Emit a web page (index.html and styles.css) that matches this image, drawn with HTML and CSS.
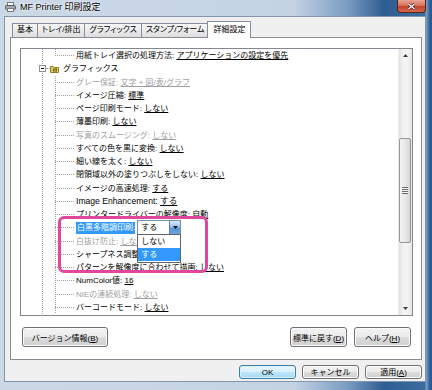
FILE: index.html
```html
<!DOCTYPE html>
<html lang="ja">
<head>
    <meta charset="UTF-8">
    <title>MF Printer 印刷設定</title>
    <link rel="stylesheet" href="styles.css">
</head>
<body>
<div class="window">
    <div class="titlebar">
        <svg class="app-icon" width="11" height="10" viewBox="0 0 11 10">
            <rect x="2.5" y="0.5" width="6" height="3" fill="#fff" stroke="#7a7a7a"/>
            <rect x="0.5" y="3.5" width="10" height="4" rx="1" fill="#a3a8b0" stroke="#555a62"/>
            <rect x="2.5" y="6.5" width="6" height="3" fill="#fff" stroke="#7a7a7a"/>
        </svg>
        <span class="title">MF Printer 印刷設定</span>
        <div class="close-btn">
            <svg width="9" height="7" viewBox="0 0 9 7">
                <path d="M1.5 1L7.5 6M7.5 1L1.5 6" stroke="#4a1c14" stroke-width="2.6"/>
                <path d="M1.5 1L7.5 6M7.5 1L1.5 6" stroke="#fff" stroke-width="1.4"/>
            </svg>
        </div>
    </div>

    <div class="frame">
        <div class="client">
            <div class="tabs">
                <div class="tab">基本</div>
                <div class="tab">トレイ/排出</div>
                <div class="tab">グラフィックス</div>
                <div class="tab">スタンプ/フォーム</div>
                <div class="tab active">詳細設定</div>
            </div>

            <div class="panel">
                <div class="tree">
                    <div class="tree-content">
                        <div class="row">
                            <span class="elbow-end"></span>
                            <span class="label">用紙トレイ選択の処理方法: <span class="val">アプリケーションの設定を優先</span></span>
                        </div>

                        <div class="group">
                            <div class="row head">
                                <span class="toggle"></span>
                                <span class="stub"></span>
                                <svg class="folder" width="9" height="8" viewBox="0 0 9 8">
                                    <path d="M0.5 1.5h3l1 1h4v5h-8z" fill="#ecc657" stroke="#9c7c1e"/>
                                    <rect x="3" y="3.5" width="4" height="3" fill="#5e6e26"/>
                                    <rect x="4" y="4.5" width="2" height="1" fill="#a8c84a"/>
                                </svg>
                                <span class="label">グラフィックス</span>
                            </div>
                            <div class="children">
                                <div class="row off"><span class="elbow"></span><span class="label">グレー保証: <span class="val">文字 + 図/表/グラフ</span></span></div>
                                <div class="row"><span class="elbow"></span><span class="label">イメージ圧縮: <span class="val">標準</span></span></div>
                                <div class="row"><span class="elbow"></span><span class="label">ページ印刷モード: <span class="val">しない</span></span></div>
                                <div class="row"><span class="elbow"></span><span class="label">薄墨印刷: <span class="val">しない</span></span></div>
                                <div class="row off"><span class="elbow"></span><span class="label">写真のスムージング: <span class="val">しない</span></span></div>
                                <div class="row"><span class="elbow"></span><span class="label">すべての色を黒に変換: <span class="val">しない</span></span></div>
                                <div class="row"><span class="elbow"></span><span class="label">細い線を太く: <span class="val">しない</span></span></div>
                                <div class="row"><span class="elbow"></span><span class="label">閉領域以外の塗りつぶしをしない: <span class="val">しない</span></span></div>
                                <div class="row"><span class="elbow"></span><span class="label">イメージの高速処理: <span class="val">する</span></span></div>
                                <div class="row"><span class="elbow"></span><span class="label latin">Image Enhancement: <span class="val">する</span></span></div>
                                <div class="row"><span class="elbow"></span><span class="label">プリンタードライバーの解像度: <span class="val">自動</span></span></div>
                                <div class="row sel">
                                    <span class="elbow"></span>
                                    <span class="label hl">白黒多階調印刷: </span>
                                    <div class="combo">
                                        <span class="combo-text">する</span>
                                        <span class="combo-btn">
                                            <svg width="5" height="3" viewBox="0 0 5 3"><path d="M0 0h5L2.5 3z" fill="#111"/></svg>
                                        </span>
                                        <div class="combo-list">
                                            <div class="opt">しない</div>
                                            <div class="opt on">する</div>
                                        </div>
                                    </div>
                                </div>
                                <div class="row off"><span class="elbow"></span><span class="label">白抜け防止: <span class="val">しない</span></span></div>
                                <div class="row"><span class="elbow"></span><span class="label">シャープネス調整</span></div>
                                <div class="row"><span class="elbow"></span><span class="label">パターンを解像度に合わせて描画: <span class="val">しない</span></span></div>
                                <div class="row"><span class="elbow"></span><span class="label">NumColor値: <span class="val">16</span></span></div>
                                <div class="row off"><span class="elbow"></span><span class="label">NIEの連続処理: <span class="val">しない</span></span></div>
                                <div class="row"><span class="elbow"></span><span class="label">バーコードモード: <span class="val">しない</span></span></div>
                            </div>
                        </div>

                        <!-- 注目枠 -->
                        <div class="callout"></div>
                    </div>

                    <div class="scrollbar">
                        <div class="sb-arrow">
                            <svg width="5" height="3" viewBox="0 0 5 3"><path d="M0 3h5L2.5 0z" fill="#3a3a3a"/></svg>
                        </div>
                        <div class="sb-track">
                            <div class="sb-thumb"><span class="grip"></span></div>
                        </div>
                        <div class="sb-arrow">
                            <svg width="5" height="3" viewBox="0 0 5 3"><path d="M0 0h5L2.5 3z" fill="#3a3a3a"/></svg>
                        </div>
                    </div>
                </div>

                <div class="panel-buttons">
                    <button class="btn wide">バージョン情報(<u>B</u>)</button>
                    <span class="spacer"></span>
                    <button class="btn">標準に戻す(<u>D</u>)</button>
                    <button class="btn">ヘルプ(<u>H</u>)</button>
                </div>
            </div>

            <div class="dialog-buttons">
                <button class="btn small default">OK</button>
                <button class="btn small">キャンセル</button>
                <button class="btn small">適用(<u>A</u>)</button>
            </div>
        </div>
    </div>
</div>
</body>
</html>
```

FILE: styles.css
```css
body {
    margin: 0;
    width: 432px;
    height: 390px;
    overflow: hidden;
    font-family: "Liberation Sans", "Noto Sans CJK JP", sans-serif;
    font-size: 8px;
    color: #000;
}

/* ウィンドウ枠 */
.window {
    width: 432px;
    height: 390px;
    display: flex;
    flex-direction: column;
    background:
        linear-gradient(to right, transparent 425px, #7fa3c9 426px, #2a5a93 430px),
        linear-gradient(to right, #cbd8e6 0%, #c4d3e4 68%, #7d9ec3 80%, #2e5d92 89%, #3f6ea0 100%);
}

.titlebar {
    height: 16px;
    display: flex;
    align-items: flex-start;
}

.app-icon {
    margin: 2px 0 0 5px;
}

.title {
    margin: 2px 0 0 4px;
    font-size: 9px;
    line-height: 11px;
    text-shadow: 0 0 4px #fff, 0 0 2px #fff;
}

.close-btn {
    margin-left: auto;
    margin-right: 6px;
    width: 29px;
    height: 13px;
    box-sizing: border-box;
    border: 1px solid #5c2118;
    border-top: none;
    border-radius: 0 0 4px 4px;
    background: linear-gradient(to bottom, #e9a596 0%, #d7735d 45%, #c4412a 55%, #d46a4f 100%);
    display: flex;
    align-items: center;
    justify-content: center;
}

.frame {
    flex: 1;
    display: flex;
    padding: 0 6px 8px 4px;
}

.client {
    flex: 1;
    display: flex;
    flex-direction: column;
    background: #f0f0f0;
    border: 1px solid #8196ad;
    padding: 4px 3px 0 5px;
}

/* タブ */
.tabs {
    display: flex;
    height: 16px;
    padding-left: 2px;
    position: relative;
    z-index: 1;
}

.tab {
    margin-top: 2px;
    height: 14px;
    box-sizing: border-box;
    padding: 0 4px;
    border: 1px solid #898c95;
    border-bottom: none;
    margin-left: -1px;
    background: linear-gradient(to bottom, #f6f6f6 0%, #ebebeb 50%, #dedede 100%);
    line-height: 12px;
    font-feature-settings: "palt";
    white-space: nowrap;
}

.tab:first-child {
    margin-left: 0;
}

.tab.active {
    margin-top: 0;
    height: 17px;
    margin-left: -2px;
    padding: 0 5px;
    background: #fff;
    line-height: 16px;
}

/* パネル */
.panel {
    height: 323px;
    box-sizing: border-box;
    border: 1px solid #898c95;
    background: #fff;
    padding: 10px 8px 12px 9px;
    display: flex;
    flex-direction: column;
}

.tree {
    display: flex;
    height: 268px;
    box-sizing: border-box;
    border: 1px solid #828790;
}

.tree-content {
    flex: 1;
    position: relative;
    overflow: hidden;
    background-image: linear-gradient(to bottom, #a0a0a0 50%, transparent 50%);
    background-size: 1px 2px;
    background-position: 21px 0;
    background-repeat: repeat-y;
}

.row {
    height: 13.25px;
    display: flex;
    align-items: center;
    padding-left: 34px;
    white-space: nowrap;
}

.elbow-end {
    align-self: flex-start;
    width: 19px;
    height: 7px;
    box-sizing: border-box;
    border-left: 1px dotted #a0a0a0;
    border-bottom: 1px dotted #a0a0a0;
    margin-right: 2px;
}

.elbow {
    width: 19px;
    height: 0;
    border-top: 1px dotted #a0a0a0;
    margin-right: 2px;
}

.row.head {
    padding-left: 18px;
}

.toggle {
    width: 7px;
    height: 7px;
    box-sizing: border-box;
    border: 1px solid #8f8f8f;
    background: linear-gradient(#000, #000) center / 3px 1px no-repeat, #fff;
}

.stub {
    width: 4px;
    border-top: 1px dotted #a0a0a0;
}

.folder {
    margin-right: 4px;
}

.children {
    background-image: linear-gradient(to bottom, #a0a0a0 50%, transparent 50%);
    background-size: 1px 2px;
    background-position: 34px 0;
    background-repeat: repeat-y;
}

.label {
    line-height: 13px;
}

.label.latin {
    font-size: 8.6px;
}

.val {
    text-decoration: underline;
}

.row.off {
    color: #a0a0a0;
}

.label.hl {
    background: #3399ff;
    color: #fff;
    padding-left: 1px;
    line-height: 12px;
}

.combo {
    position: relative;
    margin-left: 2px;
    width: 44px;
    height: 15px;
    box-sizing: border-box;
    border: 1px solid #7b8ea9;
    background: #fff;
    display: flex;
}

.combo-text {
    flex: 1;
    padding-left: 3px;
    line-height: 13px;
}

.combo-btn {
    width: 10px;
    border-left: 1px solid #5b7fae;
    background: linear-gradient(to bottom, #d6e8fa 0%, #9cc3ee 45%, #5d93d6 55%, #6fa3e0 100%);
    display: flex;
    align-items: center;
    justify-content: center;
}

.combo-list {
    position: absolute;
    top: 100%;
    left: -1px;
    width: 44px;
    box-sizing: border-box;
    border: 1px solid #646464;
    background: #fff;
    padding: 0 0 1px;
    z-index: 2;
}

.opt {
    height: 13px;
    line-height: 13px;
    padding-left: 3px;
}

.opt.on {
    background: #3399ff;
    color: #fff;
}

.callout {
    position: absolute;
    left: 37px;
    top: 167px;
    width: 150px;
    height: 57px;
    box-sizing: border-box;
    border: 3px solid #e0489e;
    border-radius: 6px;
    z-index: 3;
}

/* スクロールバー */
.scrollbar {
    width: 13px;
    display: flex;
    flex-direction: column;
    background: linear-gradient(to right, #e2e2e2, #f3f3f3 35%, #f3f3f3 65%, #e6e6e6);
    border-left: 1px solid #ececec;
}

.sb-arrow {
    height: 13px;
    display: flex;
    align-items: center;
    justify-content: center;
}

.sb-track {
    flex: 1;
}

.sb-thumb {
    margin: 76px 1px 0 0;
    height: 105px;
    box-sizing: border-box;
    border: 1px solid #979797;
    border-radius: 2px;
    background: linear-gradient(to right, #f4f4f4, #e8e8e8 50%, #d6d6d6);
    display: flex;
    align-items: center;
    justify-content: center;
}

.grip {
    width: 6px;
    height: 7px;
    background: repeating-linear-gradient(to bottom, #6a6a6a 0 1px, #f6f6f6 1px 2px);
}

/* ボタン */
.panel-buttons {
    display: flex;
    gap: 7px;
    margin-top: 11px;
    padding: 0 2px;
}

.spacer {
    flex: 1;
}

.btn {
    font: inherit;
    color: #000;
    width: 57px;
    height: 20px;
    padding: 0;
    border: 1px solid #707070;
    border-radius: 3px;
    background: linear-gradient(to bottom, #f2f2f2 0%, #ebebeb 50%, #dddddd 51%, #cfcfcf 100%);
    box-shadow: inset 0 0 0 1px #fcfcfc;
    white-space: nowrap;
}

.btn.wide {
    width: 86px;
}

.dialog-buttons {
    display: flex;
    justify-content: flex-end;
    gap: 6px;
    margin-top: 5px;
}

.btn.small {
    height: 14px;
    line-height: 11px;
}

.btn.default {
    border-color: #3c7fb1;
    background: linear-gradient(to bottom, #eaf6fd 0%, #d9f0fc 50%, #bee6fd 51%, #a7d9f5 100%);
    box-shadow: inset 0 0 0 1px #d6effc;
}
```
